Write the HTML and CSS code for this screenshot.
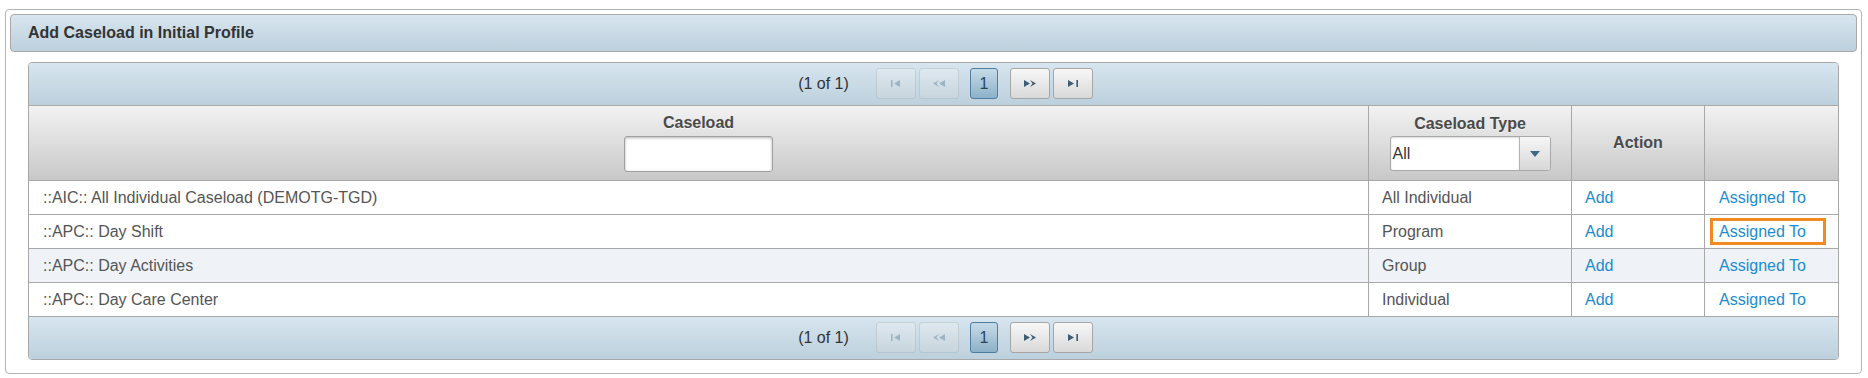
FILE: index.html
```html
<!DOCTYPE html>
<html lang="en">
<head>
  <meta charset="UTF-8">
  <title>Add Caseload in Initial Profile</title>
  <link rel="stylesheet" href="styles.css">
</head>
<body>
  <div class="panel">
    <div class="panel-title">Add Caseload in Initial Profile</div>
    <div class="panel-body">
      <div class="datatable">

        <div class="paginator paginator-top">
          <span class="pg-current">(1 of 1)</span>
          <span class="pg-btn pg-first disabled">
            <svg width="10" height="7" viewBox="0 0 10 7"><rect x="0" y="0" width="1.6" height="7"/><path d="M9 0 L3 3.5 L9 7 Z"/></svg>
          </span>
          <span class="pg-btn pg-prev disabled">
            <svg width="12" height="7" viewBox="0 0 12 7"><path d="M6 0 L0 3.5 L6 7 L3.5 3.5 Z"/><path d="M12 0 L6 3.5 L12 7 Z"/></svg>
          </span>
          <span class="pg-page active">1</span>
          <span class="pg-btn pg-next">
            <svg width="12" height="7" viewBox="0 0 12 7"><path d="M0 0 L6 3.5 L0 7 Z"/><path d="M6 0 L12 3.5 L6 7 L8.5 3.5 Z"/></svg>
          </span>
          <span class="pg-btn pg-last">
            <svg width="10" height="7" viewBox="0 0 10 7"><path d="M0 0 L6 3.5 L0 7 Z"/><rect x="8.4" y="0" width="1.6" height="7"/></svg>
          </span>
        </div>

        <table class="grid">
          <colgroup>
            <col class="col-caseload">
            <col class="col-type">
            <col class="col-action">
            <col>
          </colgroup>
          <thead>
            <tr>
              <th>
                <div class="th-label">Caseload</div>
                <input type="text" class="filter-input">
              </th>
              <th>
                <div class="th-label">Caseload Type</div>
                <div class="select">
                  <span class="select-label">All</span>
                  <span class="select-trigger">
                    <svg width="10" height="6" viewBox="0 0 10 6"><path d="M0 0 L10 0 L5 6 Z"/></svg>
                  </span>
                </div>
              </th>
              <th>Action</th>
              <th></th>
            </tr>
          </thead>
          <tbody>
            <tr>
              <td>::AIC:: All Individual Caseload (DEMOTG-TGD)</td>
              <td>All Individual</td>
              <td><a href="#">Add</a></td>
              <td><a href="#">Assigned To</a></td>
            </tr>
            <tr>
              <td>::APC:: Day Shift</td>
              <td>Program</td>
              <td><a href="#">Add</a></td>
              <td><span class="highlight"><a href="#">Assigned To</a></span></td>
            </tr>
            <tr class="row-alt">
              <td>::APC:: Day Activities</td>
              <td>Group</td>
              <td><a href="#">Add</a></td>
              <td><a href="#">Assigned To</a></td>
            </tr>
            <tr>
              <td>::APC:: Day Care Center</td>
              <td>Individual</td>
              <td><a href="#">Add</a></td>
              <td><a href="#">Assigned To</a></td>
            </tr>
          </tbody>
        </table>

        <div class="paginator paginator-bottom">
          <span class="pg-current">(1 of 1)</span>
          <span class="pg-btn pg-first disabled">
            <svg width="10" height="7" viewBox="0 0 10 7"><rect x="0" y="0" width="1.6" height="7"/><path d="M9 0 L3 3.5 L9 7 Z"/></svg>
          </span>
          <span class="pg-btn pg-prev disabled">
            <svg width="12" height="7" viewBox="0 0 12 7"><path d="M6 0 L0 3.5 L6 7 L3.5 3.5 Z"/><path d="M12 0 L6 3.5 L12 7 Z"/></svg>
          </span>
          <span class="pg-page active">1</span>
          <span class="pg-btn pg-next">
            <svg width="12" height="7" viewBox="0 0 12 7"><path d="M0 0 L6 3.5 L0 7 Z"/><path d="M6 0 L12 3.5 L6 7 L8.5 3.5 Z"/></svg>
          </span>
          <span class="pg-btn pg-last">
            <svg width="10" height="7" viewBox="0 0 10 7"><path d="M0 0 L6 3.5 L0 7 Z"/><rect x="8.4" y="0" width="1.6" height="7"/></svg>
          </span>
        </div>

      </div>
    </div>
  </div>
</body>
</html>
```

FILE: styles.css
```css
body {
  margin: 0;
  padding: 9px 6px 0 5px;
  font-family: "Liberation Sans", Arial, sans-serif;
  font-size: 16px;
  color: #555;
  background: #fff;
}
.panel {
  border: 1px solid #b4b4b4;
  border-radius: 4px;
  padding: 4px;
}
.panel-title {
  height: 38px;
  box-sizing: border-box;
  border: 1px solid #a8a8a8;
  border-radius: 4px;
  background: linear-gradient(#d8e6ef, #bcd0dd);
  padding: 0 17px;
  line-height: 36px;
  font-weight: bold;
  color: #333;
}
.panel-body {
  padding: 10px 18px 9px 18px;
}
.datatable {
  border: 1px solid #a8a8a8;
  border-radius: 4px;
  overflow: hidden;
}
.paginator {
  display: flex;
  justify-content: center;
  align-items: center;
  padding: 5px 0 6px 24px;
  background: linear-gradient(#d7e5ef, #bcd0dd);
}
.paginator-top {
  border-bottom: 1px solid #a8a8a8;
}
.pg-current {
  color: #333;
  margin-right: 27px;
}
.pg-btn,
.pg-page {
  display: inline-flex;
  align-items: center;
  justify-content: center;
  box-sizing: border-box;
  width: 40px;
  height: 31px;
  border: 1px solid #a6a6a6;
  border-radius: 3px;
  background: linear-gradient(#f7f7f7, #d9d9d9);
  fill: #3e5c74;
}
.pg-prev,
.pg-last {
  margin-left: 3px;
}
.pg-page {
  width: 28px;
  margin: 0 12px 0 11px;
  border-color: #4f7d9d;
  background: linear-gradient(#c6dbe8, #8db1c9);
  color: #2b465a;
}
.disabled {
  opacity: 0.3;
}
.grid {
  width: 100%;
  table-layout: fixed;
  border-collapse: separate;
  border-spacing: 0;
}
.col-caseload {
  width: 1339px;
}
.col-type {
  width: 203px;
}
.col-action {
  width: 133px;
}
.grid th {
  padding: 8px 10px;
  background: linear-gradient(#f2f2f2, #c8c8c8);
  border-bottom: 1px solid #a8a8a8;
  color: #4a4a4a;
  font-weight: bold;
  line-height: 18px;
  text-shadow: 0 1px 0 rgba(255,255,255,0.6);
  vertical-align: middle;
}
.grid th + th,
.grid td + td {
  border-left: 1px solid #a8a8a8;
}
.th-label {
  height: 18px;
}
.filter-input {
  display: block;
  margin: 4px auto 0;
  width: 149px;
  height: 36px;
  box-sizing: border-box;
  border: 1px solid #a0a0a0;
  border-radius: 3px;
  box-shadow: inset 0 1px 3px rgba(0,0,0,0.3);
  background: #fff;
}
.select {
  display: flex;
  margin: 3px auto 0;
  width: 161px;
  height: 35px;
  box-sizing: border-box;
  border: 1px solid #a8a8a8;
  border-radius: 3px;
  background: #fff;
  overflow: hidden;
  text-align: left;
}
.select-label {
  flex: 1;
  padding-left: 2px;
  line-height: 33px;
  font-weight: normal;
  color: #333;
  text-shadow: none;
  box-shadow: inset 0 1px 2px rgba(0,0,0,0.15);
}
.select-trigger {
  display: flex;
  align-items: center;
  justify-content: center;
  width: 30px;
  border-left: 1px solid #b4b4b4;
  background: linear-gradient(#f6f6f6, #d8d8d8);
  fill: #3f6886;
}
.grid td {
  padding: 7px 14px 7px 13px;
  line-height: 19px;
  border-bottom: 1px solid #a8a8a8;
  background: #fff;
  white-space: nowrap;
}
.grid td:first-child,
.grid td:last-child {
  padding-left: 14px;
}
.grid .row-alt td {
  background: #eff3f8;
}
.grid a {
  color: #1a8cd0;
  text-decoration: none;
}
.highlight {
  display: inline-block;
  margin: -5px 0 -4px -9px;
  padding: 2px 17px 1px 6px;
  border: 3px solid #f28a22;
  line-height: 18px;
}
```
